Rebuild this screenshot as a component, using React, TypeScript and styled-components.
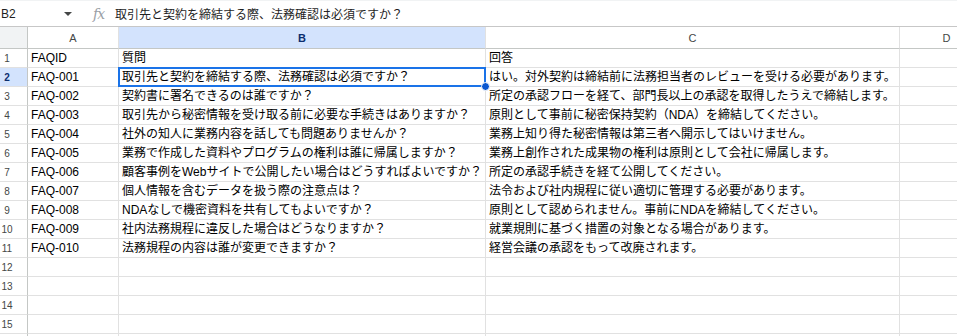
import React from "react";
import styled, { createGlobalStyle, css } from "styled-components";

const GlobalStyle = createGlobalStyle`
  html, body {
    margin: 0;
    padding: 0;
    background: #ffffff;
  }
  body {
    font-family: "Liberation Sans", Arial, "Noto Sans CJK JP", sans-serif;
    color: #1f1f1f;
  }
`;

const Page = styled.div`
  width: 957px;
  height: 336px;
  overflow: hidden;
  background: #ffffff;
`;

const FormulaBar = styled.div`
  display: flex;
  align-items: center;
  height: 27px;
  box-sizing: border-box;
  border-top: 1px solid #f1f3f4;
  border-bottom: 1px solid #c7c7c7;
  font-size: 12px;
`;

const NameBox = styled.div`
  width: 63px;
  padding-left: 1px;
  font-size: 12px;
  color: #1f1f1f;
`;

const Caret = styled.svg`
  width: 8px;
  height: 4px;
  display: block;
`;

const FxIcon = styled.span`
  margin-left: 21px;
  width: 13px;
  font-family: "DejaVu Serif", "Liberation Serif", serif;
  font-style: italic;
  font-size: 14px;
  color: #9aa0a6;
  letter-spacing: -1px;
`;

const FormulaText = styled.span`
  margin-left: 9px;
  white-space: nowrap;
  font-size: 12px;
  color: #1f1f1f;
`;

const Grid = styled.div`
  display: grid;
  grid-template-columns: 28px 91px 367px 414px 94px;
  grid-template-rows: 22px;
  grid-auto-rows: 19px;
  width: 994px;
`;

const Cell = styled.div<{ $selected?: boolean }>`
  position: relative;
  box-sizing: border-box;
  border-right: 1px solid #e1e1e1;
  border-bottom: 1px solid #e1e1e1;
  padding: 0 3px 1px;
  display: flex;
  align-items: flex-end;
  font-size: 12px;
  line-height: 15px;
  color: #000000;
  white-space: nowrap;
  overflow: hidden;

  ${(p) =>
    p.$selected &&
    css`
      overflow: visible;
      z-index: 2;
      &::after {
        content: "";
        position: absolute;
        top: -1px;
        left: -1px;
        right: -1px;
        bottom: -1px;
        border: 2px solid #1a73e8;
        pointer-events: none;
      }
    `}
`;

const Handle = styled.span`
  position: absolute;
  right: -5px;
  bottom: -5px;
  width: 7px;
  height: 7px;
  border-radius: 50%;
  background: #0b57d0;
  border: 1px solid #ffffff;
  z-index: 3;
`;

const Corner = styled.div`
  box-sizing: border-box;
  background: #f1f3f4;
  border-right: 1px solid #c4c7c5;
  border-bottom: 1px solid #c4c7c5;
`;

const ColHeader = styled.div<{ $active?: boolean }>`
  box-sizing: border-box;
  display: flex;
  align-items: center;
  justify-content: center;
  border-right: 1px solid #e1e1e1;
  border-bottom: 1px solid #c4c7c5;
  font-size: 11px;
  padding-top: 1px;
  color: ${(p) => (p.$active ? "#0b2e6e" : "#444746")};
  font-weight: ${(p) => (p.$active ? 700 : 400)};
  background: ${(p) => (p.$active ? "#d3e3fd" : "#ffffff")};
`;

const RowHeader = styled.div<{ $active?: boolean }>`
  box-sizing: border-box;
  display: flex;
  align-items: center;
  justify-content: center;
  padding-right: 13px;
  border-right: 1px solid #c4c7c5;
  border-bottom: 1px solid #e1e1e1;
  font-size: 10px;
  color: ${(p) => (p.$active ? "#0b2e6e" : "#444746")};
  font-weight: ${(p) => (p.$active ? 700 : 400)};
  background: ${(p) => (p.$active ? "#d3e3fd" : "#ffffff")};
`;

const rows: [string, string, string][] = [
  ["FAQID", "質問", "回答"],
  ["FAQ-001", "取引先と契約を締結する際、法務確認は必須ですか？", "はい。対外契約は締結前に法務担当者のレビューを受ける必要があります。"],
  ["FAQ-002", "契約書に署名できるのは誰ですか？", "所定の承認フローを経て、部門長以上の承認を取得したうえで締結します。"],
  ["FAQ-003", "取引先から秘密情報を受け取る前に必要な手続きはありますか？", "原則として事前に秘密保持契約（NDA）を締結してください。"],
  ["FAQ-004", "社外の知人に業務内容を話しても問題ありませんか？", "業務上知り得た秘密情報は第三者へ開示してはいけません。"],
  ["FAQ-005", "業務で作成した資料やプログラムの権利は誰に帰属しますか？", "業務上創作された成果物の権利は原則として会社に帰属します。"],
  ["FAQ-006", "顧客事例をWebサイトで公開したい場合はどうすればよいですか？", "所定の承認手続きを経て公開してください。"],
  ["FAQ-007", "個人情報を含むデータを扱う際の注意点は？", "法令および社内規程に従い適切に管理する必要があります。"],
  ["FAQ-008", "NDAなしで機密資料を共有してもよいですか？", "原則として認められません。事前にNDAを締結してください。"],
  ["FAQ-009", "社内法務規程に違反した場合はどうなりますか？", "就業規則に基づく措置の対象となる場合があります。"],
  ["FAQ-010", "法務規程の内容は誰が変更できますか？", "経営会議の承認をもって改廃されます。"],
];

// 15 labelled rows fit the window; a 16th only peeks in at the bottom edge
const VISIBLE_ROWS = 15;
const TOTAL_ROWS = 16;
const columns = ["A", "B", "C", "D"];

export default function App() {
  return (
    <Page>
      <GlobalStyle />
      <FormulaBar>
        <NameBox>B2</NameBox>
        <Caret viewBox="0 0 8 4">
          <path d="M0 0 L8 0 L4 4 Z" fill="#444746" />
        </Caret>
        <FxIcon>fx</FxIcon>
        <FormulaText>取引先と契約を締結する際、法務確認は必須ですか？</FormulaText>
      </FormulaBar>
      <Grid>
        <Corner />
        {columns.map((c) => (
          <ColHeader key={c} $active={c === "B"}>
            {c}
          </ColHeader>
        ))}
        {Array.from({ length: TOTAL_ROWS }, (_, i) => {
          const r = rows[i];
          const num = i + 1;
          return (
            <React.Fragment key={num}>
              <RowHeader $active={num === 2}>{num <= VISIBLE_ROWS ? num : ""}</RowHeader>
              <Cell>{r ? r[0] : ""}</Cell>
              <Cell $selected={num === 2}>
                {r ? r[1] : ""}
                {num === 2 && <Handle />}
              </Cell>
              <Cell>{r ? r[2] : ""}</Cell>
              <Cell />
            </React.Fragment>
          );
        })}
      </Grid>
    </Page>
  );
}
